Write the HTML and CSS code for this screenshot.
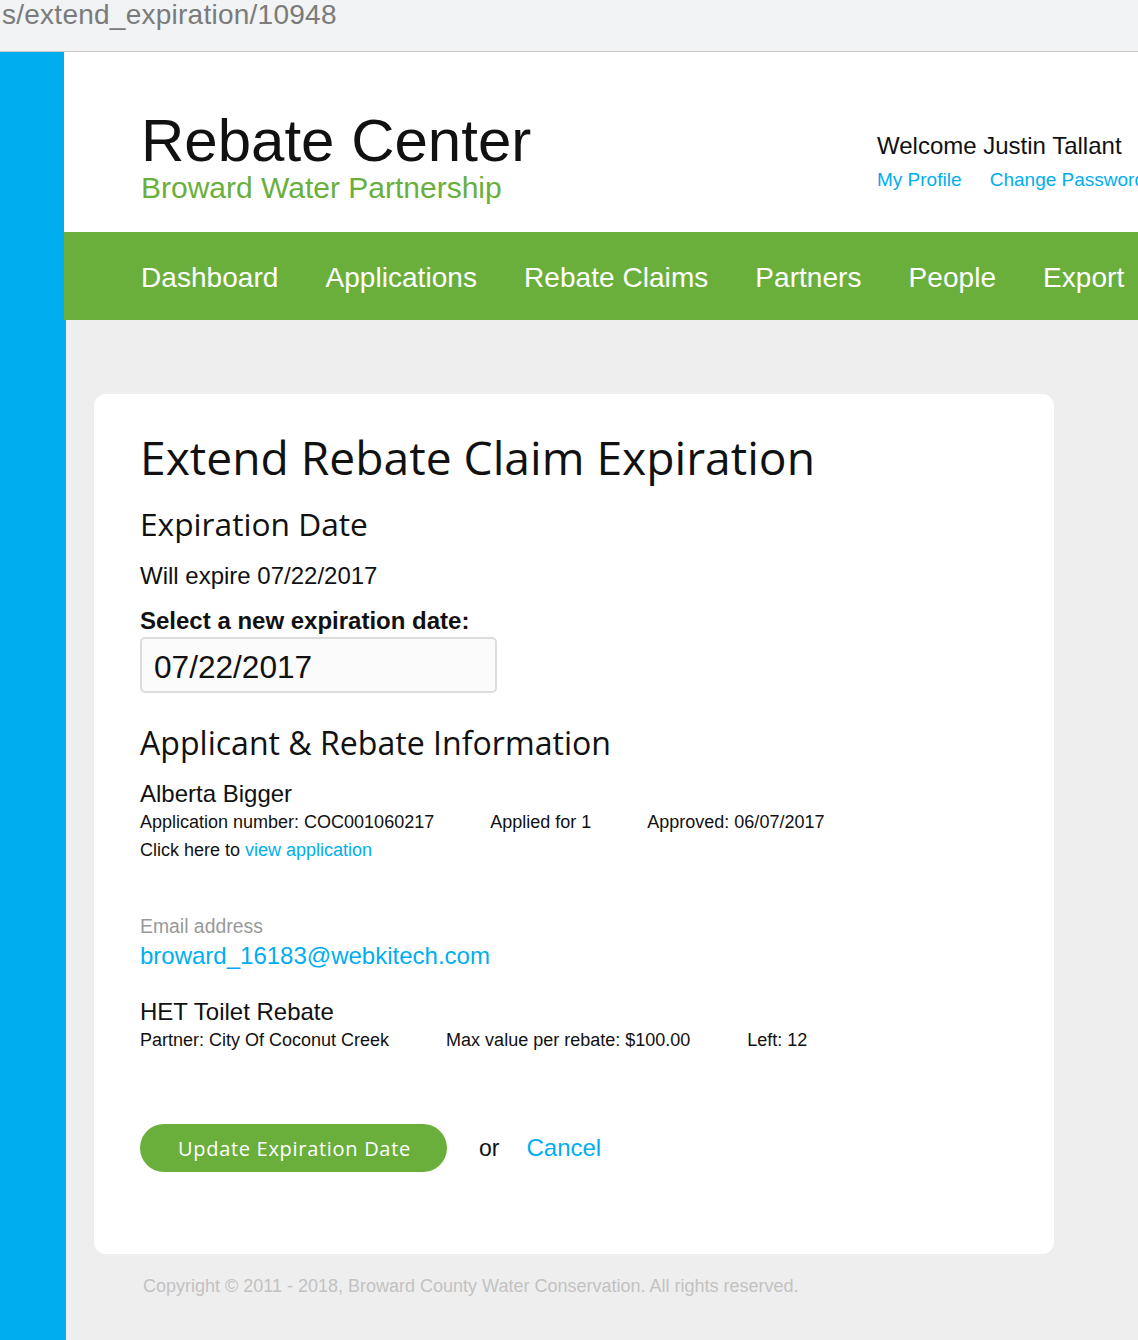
FILE: index.html
```html
<!DOCTYPE html>
<html lang="en">
<head>
<meta charset="utf-8">
<title>Extend Rebate Claim Expiration</title>
<link rel="stylesheet" href="styles.css">
</head>
<body>
<div class="urlbar"><span class="url">s/extend_expiration/10948</span></div>
<div class="app">
  <aside class="rail"></aside>
  <div class="main">
    <header class="masthead">
      <div class="brand">
        <h1 class="brand-title">Rebate Center</h1>
        <div class="brand-sub">Broward Water Partnership</div>
      </div>
      <div class="account">
        <div class="welcome">Welcome Justin Tallant</div>
        <div class="account-links">
          <a class="link" href="#">My Profile</a>
          <a class="link link-gap" href="#">Change Password</a>
        </div>
      </div>
    </header>
    <nav class="topnav">
      <a class="nav-item" href="#">Dashboard</a>
      <a class="nav-item" href="#">Applications</a>
      <a class="nav-item" href="#">Rebate Claims</a>
      <a class="nav-item" href="#">Partners</a>
      <a class="nav-item" href="#">People</a>
      <a class="nav-item" href="#">Export</a>
    </nav>
    <section class="content">
      <div class="card">
        <h1 class="page-title">Extend Rebate Claim Expiration</h1>
        <h2 class="section-title">Expiration Date</h2>
        <p class="expire-text">Will expire 07/22/2017</p>
        <label class="field-label" for="newdate">Select a new expiration date:</label>
        <input class="date-input" id="newdate" type="text" value="07/22/2017">

        <h2 class="section-title info-title">Applicant &amp; Rebate Information</h2>
        <div class="name-line">Alberta Bigger</div>
        <div class="meta-line">
          <span class="meta">Application number: COC001060217</span>
          <span class="meta">Applied for 1</span>
          <span class="meta">Approved: 06/07/2017</span>
        </div>
        <div class="meta-line">Click here to <a class="link" href="#">view application</a></div>

        <div class="email-label">Email address</div>
        <a class="link email-link" href="#">broward_16183@webkitech.com</a>

        <div class="name-line rebate-name">HET Toilet Rebate</div>
        <div class="meta-line">
          <span class="meta">Partner: City Of Coconut Creek</span>
          <span class="meta">Max value per rebate: $100.00</span>
          <span class="meta">Left: 12</span>
        </div>

        <div class="actions">
          <button class="btn-primary" type="button">Update Expiration Date</button>
          <span class="or">or</span>
          <a class="link cancel" href="#">Cancel</a>
        </div>
      </div>
      <footer class="footer">Copyright © 2011 - 2018, Broward County Water Conservation. All rights reserved.</footer>
    </section>
  </div>
</div>
</body>
</html>
```

FILE: styles.css
```css
* { box-sizing: border-box; }

html, body {
  margin: 0;
  padding: 0;
}

body {
  width: 1138px;
  height: 1340px;
  overflow: hidden;
  font-family: "Liberation Sans", Arial, sans-serif;
  color: #111;
  background: #eeeeee;
}

.urlbar {
  height: 52px;
  background: #f1f3f4;
  border-bottom: 1px solid #c9c9c9;
  overflow: hidden;
  white-space: nowrap;
}

.url {
  display: block;
  padding-left: 2px;
  font-size: 28px;
  line-height: 29px;
  letter-spacing: 0.25px;
  color: #7b7b7b;
}

.app {
  display: flex;
  height: 1288px;
}

.rail {
  flex: none;
  width: 64px;
  background: #00aeef;
}

.main {
  flex: 1;
  min-width: 0;
  display: flex;
  flex-direction: column;
}

.masthead {
  display: flex;
  height: 180px;
  padding-left: 77px;
  background: #fff;
  overflow: hidden;
}

.brand {
  flex: none;
  width: 736px;
  padding-top: 59px;
}

.brand-title {
  margin: 0;
  font-size: 60px;
  line-height: 60px;
  font-weight: normal;
  color: #111;
}

.brand-sub {
  padding-top: 2px;
  font-size: 30px;
  line-height: 30px;
  color: #6aaf3c;
}

.account {
  flex: none;
  padding-top: 82px;
  white-space: nowrap;
}

.welcome {
  font-size: 24px;
  line-height: 24px;
  color: #111;
}

.account-links {
  margin-top: 12px;
  font-size: 19px;
  line-height: 19px;
}

.link {
  color: #00aeef;
  text-decoration: none;
}

.link-gap { margin-left: 23px; }

.topnav {
  display: flex;
  gap: 47px;
  height: 88px;
  padding: 3px 0 0 77px;
  background: #6aaf3c;
  white-space: nowrap;
  overflow: hidden;
}

.nav-item {
  font-size: 28px;
  line-height: 86px;
  letter-spacing: 0.05px;
  color: #fff;
  text-decoration: none;
}

.content {
  flex: 1;
  border-left: 2px solid #00aeef;
  padding: 74px 0 0 28px;
  background: #eeeeee;
}

.card {
  width: 960px;
  background: #fff;
  border-radius: 12px;
  padding: 36px 46px 82px 46px;
}

.page-title {
  margin: 0;
  font-family: "Open Sans", "Noto Sans", sans-serif;
  font-weight: normal;
  font-size: 46.2px;
  line-height: 56px;
  color: #111;
}

.section-title {
  margin: 18px 0 0;
  font-family: "Open Sans", "Noto Sans", sans-serif;
  font-weight: normal;
  font-size: 31.7px;
  line-height: 40px;
  color: #111;
}

.expire-text {
  margin: 18px 0 0;
  font-size: 24px;
  line-height: 28px;
}

.field-label {
  display: block;
  margin-top: 17px;
  font-size: 24px;
  line-height: 28px;
  font-weight: bold;
}

.date-input {
  display: block;
  margin-top: 2px;
  width: 357px;
  height: 56px;
  padding: 5px 12px 0;
  border: 2px solid #dcdcdc;
  border-radius: 5px;
  background: #fbfbfb;
  font-family: "Liberation Sans", Arial, sans-serif;
  font-size: 31.6px;
  color: #111;
  outline: none;
}

.info-title {
  margin-top: 30px;
  font-size: 32.1px;
}

.name-line {
  margin-top: 17px;
  font-size: 24px;
  line-height: 28px;
}

.meta-line {
  font-size: 18px;
  line-height: 28px;
  white-space: nowrap;
}

.meta { margin-right: 52px; }
.meta:last-child { margin-right: 0; }

.email-label {
  margin-top: 48px;
  font-size: 19.4px;
  line-height: 28px;
  color: #999;
}

.email-link {
  display: block;
  font-size: 24px;
  line-height: 31px;
}

.rebate-name { margin-top: 27px; }

.actions {
  display: flex;
  align-items: center;
  margin-top: 70px;
}

.btn-primary {
  width: 307px;
  height: 48px;
  padding: 0 0 0 38px;
  text-align: left;
  border: none;
  border-radius: 24px;
  background: #6aaf3c;
  color: #fff;
  font-family: "Open Sans", "Noto Sans", sans-serif;
  font-size: 20px;
  letter-spacing: 0.7px;
  cursor: pointer;
}

.or {
  margin-left: 32px;
  font-size: 23px;
  color: #111;
}

.cancel {
  margin-left: 27px;
  font-size: 24px;
}

.footer {
  margin-top: 18px;
  padding-left: 49px;
  font-size: 18px;
  line-height: 28px;
  color: #c2c2c2;
}
```
